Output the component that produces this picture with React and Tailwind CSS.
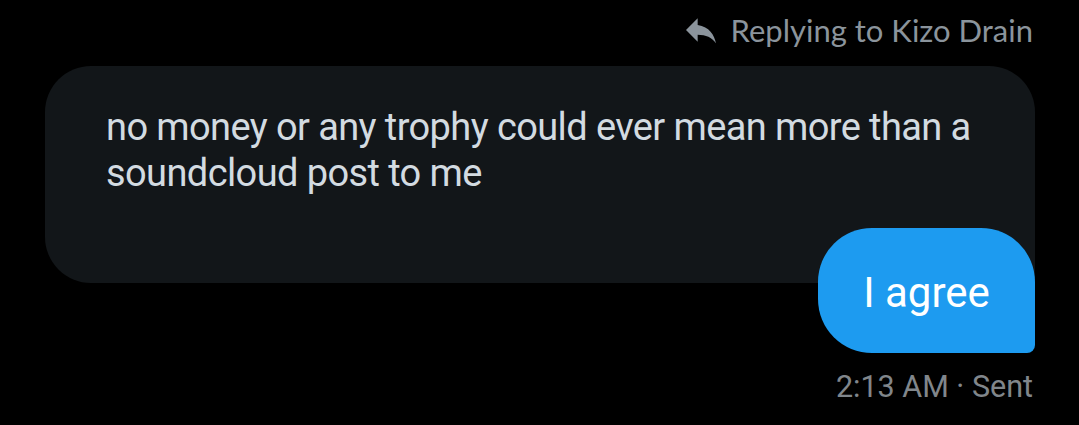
import React from 'react';

const ReplyIcon = () => (
    <svg viewBox="0 0 24 24" className="w-[40px] h-[40px] fill-[#8b949c]">
        <path d="M10 9V5l-7 7 7 7v-4.1c5 0 8.5 1.6 11 5.1-1-5-4-10-11-11z" />
    </svg>
);

export default function App() {
    return (
        <div className="w-[1079px] h-[425px] bg-black overflow-hidden pl-[45px] pr-[44px] pt-[12px] font-['Roboto',sans-serif]">

            <div className="flex justify-end items-center gap-[10px] h-[36px] pr-[2px]">
                <ReplyIcon />
                <span className="font-['Lato',sans-serif] text-[31px] leading-[36px] text-[#8b949c]">Replying to Kizo Drain</span>
            </div>

            <div className="mt-[18px] h-[217px] bg-[#121619] rounded-[46px] rounded-br-[10px] pl-[61px] pr-[20px] pt-[38px]">
                <p className="text-[38px] leading-[46px] tracking-[-0.6px] text-[#d3dbe1]">
                    no money or any trophy could ever mean more than a soundcloud post to me
                </p>
            </div>

            <div className="flex justify-end -mt-[55px]">
                <div className="w-[217px] h-[125px] bg-[#1d9bf0] rounded-[54px] rounded-br-[8px] flex items-center justify-center pt-[4px]">
                    <span className="text-[42px] leading-none text-white">I agree</span>
                </div>
            </div>

            <div className="mt-[17px] flex justify-end pr-[2px]">
                <span className="text-[30.5px] leading-[34px] text-[#80868b]">2:13 AM · Sent</span>
            </div>

        </div>
    );
}
